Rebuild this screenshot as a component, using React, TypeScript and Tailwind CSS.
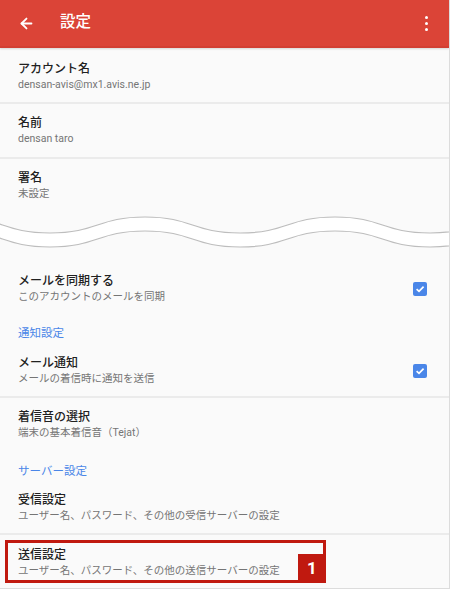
import { ArrowLeft } from 'lucide-react';

const font = { fontFamily: 'Roboto, "Noto Sans CJK JP", sans-serif' };

function Check() {
  return (
    <div className="w-[14px] h-[14px] rounded-[2px] bg-[#4a86e8] flex items-center justify-center">
      <svg width="10" height="10" viewBox="0 0 10 10">
        <path d="M1.6 5.2 L4 7.4 L8.6 2.6" fill="none" stroke="#fff" strokeWidth="1.7" />
      </svg>
    </div>
  );
}

function Item({ title, sub }: { title: string; sub: string }) {
  return (
    <div>
      <div className="text-[12px] leading-[16px] font-medium text-[#212121]">{title}</div>
      <div className="text-[10.5px] leading-[15px] text-[#757575]">{sub}</div>
    </div>
  );
}

function Divider() {
  return <div className="h-[2px] bg-[#ebebeb]" />;
}

function Wave() {
  const top = 'M -45 4 C 2.5 4 2.5 20 50 20 S 97.5 4 145 4 S 192.5 20 240 20 S 287.5 4 335 4 S 382.5 20 430 20 S 477.5 4 525 4';
  const bottom = 'M -45 18 C 2.5 18 2.5 34 50 34 S 97.5 18 145 18 S 192.5 34 240 34 S 287.5 18 335 18 S 382.5 34 430 34 S 477.5 18 525 18';
  const band = top + ' L 525 18 C 477.5 18 477.5 34 430 34 S 382.5 18 335 18 S 287.5 34 240 34 S 192.5 18 145 18 S 97.5 34 50 34 S 2.5 18 -45 18 Z';
  return (
    <svg width="449" height="38" viewBox="0 0 449 38" className="block">
      <path d={band} fill="#fff" />
      <path d={top} fill="none" stroke="#bdbdbd" strokeWidth="1.2" />
      <path d={bottom} fill="none" stroke="#bdbdbd" strokeWidth="1.2" />
    </svg>
  );
}

export default function App() {
  return (
    <div className="w-[450px] h-[589px] overflow-hidden bg-[#fafafa] border-r border-b border-[#dcdcdc]" style={font}>
      {/* Toolbar */}
      <header className="h-[48px] bg-[#db4437] border-b-2 border-[#d23f33] flex items-center px-[18px] text-white shadow-[0_1px_2px_rgba(0,0,0,0.15)]">
        <ArrowLeft size={17} strokeWidth={2.6} />
        <div className="ml-[25px] text-[15.5px] font-medium">設定</div>
        <div className="ml-auto mr-[3px] flex flex-col gap-[3px]">
          <span className="w-[3px] h-[3px] rounded-full bg-white" />
          <span className="w-[3px] h-[3px] rounded-full bg-white" />
          <span className="w-[3px] h-[3px] rounded-full bg-white" />
        </div>
      </header>

      <div className="pl-[18px] pt-[13px] pb-[10px]">
        <Item title="アカウント名" sub="densan-avis@mx1.avis.ne.jp" />
      </div>
      <Divider />
      <div className="pl-[18px] pt-[11px] pb-[11px]">
        <Item title="名前" sub="densan taro" />
      </div>
      <Divider />
      <div className="pl-[18px] pt-[11px]">
        <Item title="署名" sub="未設定" />
      </div>

      <div className="pt-[12px] pb-[22px]">
        <Wave />
      </div>

      <div className="pl-[18px] pr-[22px] flex items-center justify-between">
        <Item title="メールを同期する" sub="このアカウントのメールを同期" />
        <Check />
      </div>

      <div className="pl-[18px] pt-[21px] text-[11.5px] leading-[16px] text-[#4a86e8]">通知設定</div>

      <div className="pl-[18px] pr-[22px] pt-[14px] pb-[10px] flex items-center justify-between">
        <Item title="メール通知" sub="メールの着信時に通知を送信" />
        <Check />
      </div>
      <Divider />

      <div className="pl-[18px] pt-[11px]">
        <Item title="着信音の選択" sub="端末の基本着信音（Tejat）" />
      </div>

      <div className="pl-[18px] pt-[23px] text-[11.5px] leading-[16px] text-[#4a86e8]">サーバー設定</div>

      <div className="pl-[18px] pt-[13px] pb-[10px]">
        <Item title="受信設定" sub="ユーザー名、パスワード、その他の受信サーバーの設定" />
      </div>
      <Divider />

      <div className="relative pl-[18px] pt-[12px]">
        <Item title="送信設定" sub="ユーザー名、パスワード、その他の送信サーバーの設定" />
        {/* annotation */}
        <div className="absolute left-[5px] top-[5px] w-[321px] h-[43px] border-[3px] border-[#c0190f]">
          <div className="absolute right-[-3px] bottom-[-3px] w-[28px] h-[29px] bg-[#c0190f] flex items-center justify-center text-white text-[17px] font-bold" style={{ fontFamily: 'Roboto, sans-serif' }}>
            1
          </div>
        </div>
      </div>
    </div>
  );
}
